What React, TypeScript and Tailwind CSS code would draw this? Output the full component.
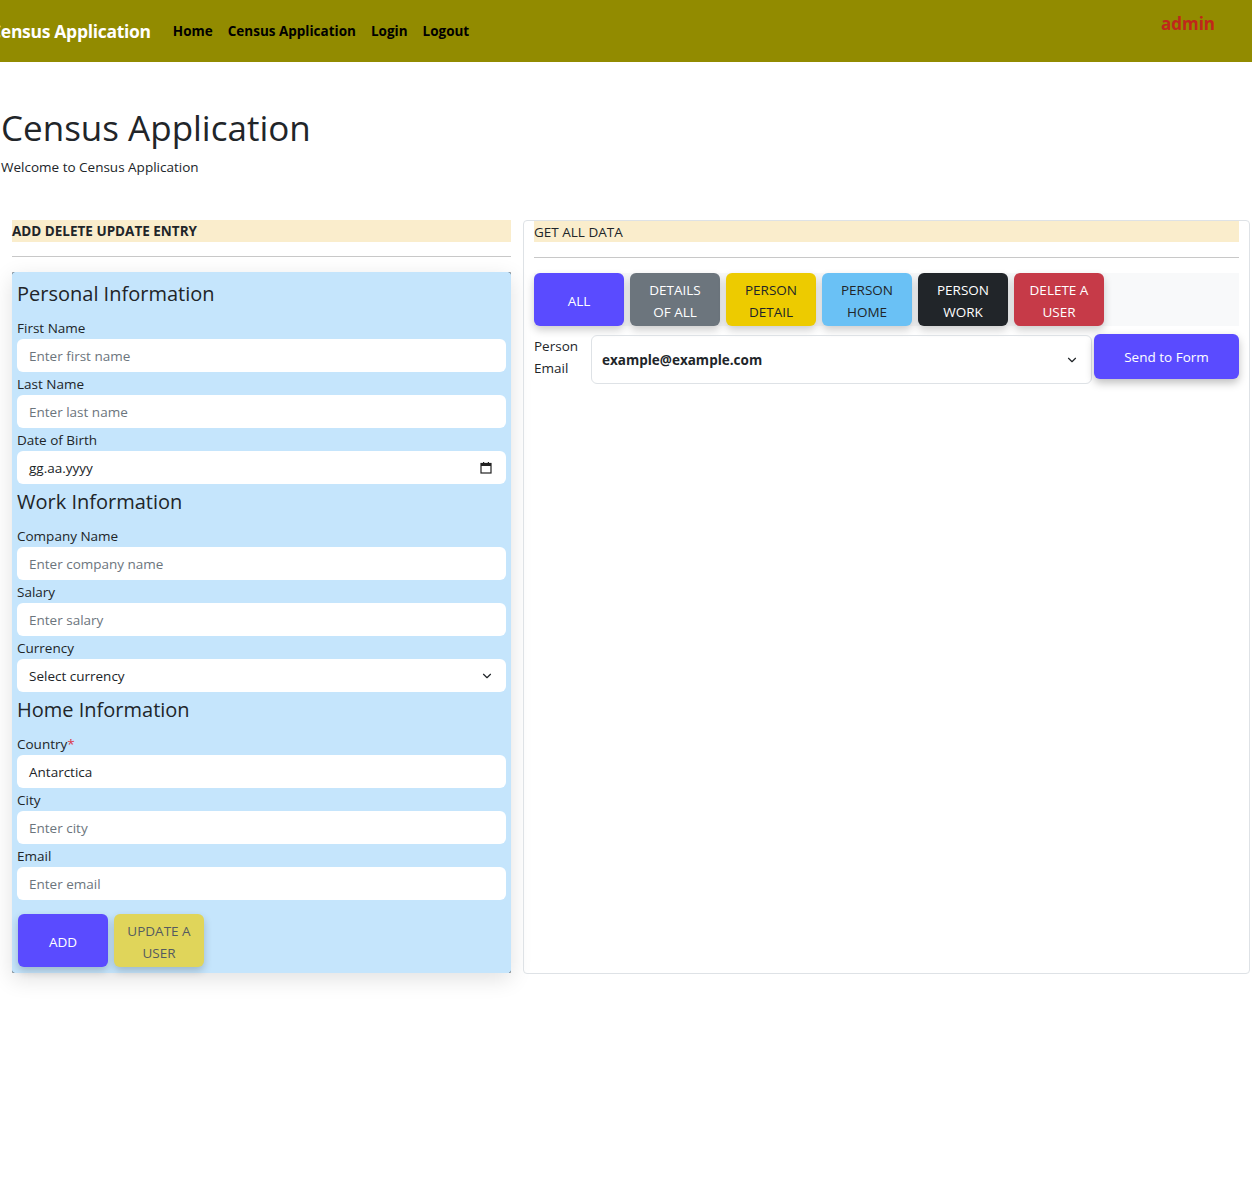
import { ChevronDown } from "lucide-react";

const font = { fontFamily: '"Open Sans", "Noto Sans", sans-serif' };

function CalendarIcon() {
  return (
    <svg width="12" height="12" viewBox="0 0 12 12" className="text-[#222]">
      <rect x="1" y="1.5" width="10" height="9.5" fill="none" stroke="currentColor" strokeWidth="1.2" />
      <rect x="1" y="1.5" width="10" height="2.5" fill="currentColor" />
      <rect x="3" y="0" width="1.2" height="2" fill="currentColor" />
      <rect x="7.8" y="0" width="1.2" height="2" fill="currentColor" />
    </svg>
  );
}

function Field({ label, placeholder, value, required }: { label: string; placeholder?: string; value?: string; required?: boolean }) {
  return (
    <div>
      <div className="h-[22px] text-[13.5px] leading-[22px] text-[#212529]">
        {label}
        {required && <span className="text-[#dc3545]">*</span>}
      </div>
      <div className="h-[34px] pb-px">
        <div className="flex h-[33px] items-center rounded-[6px] bg-white px-3 text-[13.5px]">
          {value ? (
            <span className="text-[#212529]">{value}</span>
          ) : (
            <span className="text-[#6c757d]">{placeholder}</span>
          )}
        </div>
      </div>
    </div>
  );
}

function Heading({ children }: { children: React.ReactNode }) {
  return <h3 className="mt-[4px] mb-[10px] h-[26px] text-[20px] leading-[26px] text-[#212529]">{children}</h3>;
}

function SmallBtn({ label, cls }: { label: React.ReactNode; cls: string }) {
  return (
    <button
      className={`flex h-[53px] w-[90px] items-center justify-center rounded-[6px] pt-[2px] text-center text-[13.5px] leading-[22px] shadow-[0_4px_8px_rgba(0,0,0,0.2)] ${cls}`}
    >
      {label}
    </button>
  );
}

export default function App() {
  return (
    <div className="min-h-[1189px] bg-white" style={font}>
      {/* navbar */}
      <nav className="flex h-[62px] items-center justify-between overflow-hidden bg-[#928b00]">
        <div className="flex items-center">
          <span className="ml-[-10px] text-[17.5px] font-bold tracking-[-0.3px] text-white">Census Application</span>
          <div className="ml-[22px] flex gap-[15px] text-[13.5px] font-bold text-black">
            <span>Home</span>
            <span>Census Application</span>
            <span>Login</span>
            <span>Logout</span>
          </div>
        </div>
        <span className="mr-[37px] mb-[14px] text-[17px] font-bold text-[#c0271a]">admin</span>
      </nav>

      {/* title */}
      <div className="pt-[42px] pl-px">
        <h1 className="text-[35px] leading-[48px] text-[#212529]">Census Application</h1>
        <p className="mt-[5px] text-[13.5px] text-[#212529]">Welcome to Census Application</p>
      </div>

      <div className="mt-[43px] flex items-start gap-[12px] pl-[12px] pr-[2px]">
        {/* left column */}
        <div className="w-[499px] shrink-0">
          <div className="h-[22px] bg-[#faedcc] text-[13.5px] font-bold leading-[22px] text-[#212529]">
            ADD DELETE UPDATE ENTRY
          </div>
          <hr className="mt-[14px] mb-[15px] border-t border-[#c8c8c8]" />
          <div className="rounded-[2px] bg-black shadow-[0_6px_22px_rgba(0,0,0,0.12)]">
            <div className="rounded-[3px] bg-[#c5e5fc] px-[5px] pt-[5px] pb-[6px]">
              <Heading>Personal Information</Heading>
              <Field label="First Name" placeholder="Enter first name" />
              <Field label="Last Name" placeholder="Enter last name" />
              <div>
                <div className="h-[22px] text-[13.5px] leading-[22px] text-[#212529]">Date of Birth</div>
                <div className="h-[34px] pb-px">
                  <div className="flex h-[33px] items-center justify-between rounded-[6px] bg-white pr-[14px] pl-3 text-[13.5px] text-[#212529]">
                    <span>gg.aa.yyyy</span>
                    <CalendarIcon />
                  </div>
                </div>
              </div>
              <Heading>Work Information</Heading>
              <Field label="Company Name" placeholder="Enter company name" />
              <Field label="Salary" placeholder="Enter salary" />
              <div>
                <div className="h-[22px] text-[13.5px] leading-[22px] text-[#212529]">Currency</div>
                <div className="h-[34px] pb-px">
                  <div className="flex h-[33px] items-center justify-between rounded-[6px] bg-white pr-[12px] pl-3 text-[13.5px] text-[#212529]">
                    <span>Select currency</span>
                    <ChevronDown size={14} strokeWidth={2} />
                  </div>
                </div>
              </div>
              <Heading>Home Information</Heading>
              <Field label="Country" value="Antarctica" required />
              <Field label="City" placeholder="Enter city" />
              <Field label="Email" placeholder="Enter email" />
              <div className="mt-[13px] flex gap-[6px] pl-px">
                <SmallBtn label="ADD" cls="bg-[#5a4bff] text-white" />
                <SmallBtn label={<>UPDATE A<br />USER</>} cls="bg-[#e0d55a] text-[#555b60]" />
              </div>
            </div>
          </div>
        </div>

        {/* right column */}
        <div className="flex h-[754px] flex-1 flex-col rounded-[4px] border border-[#dee2e6] px-[10px]">
          <div className="h-[21px] bg-[#faedcc] text-[13.5px] leading-[22px] text-[#212529]">GET ALL DATA</div>
          <hr className="mt-[15px] mb-[15px] border-t border-[#c8c8c8]" />
          <div className="flex h-[53px] gap-[6px] bg-[#f8f9fa]">
            <SmallBtn label="ALL" cls="bg-[#5a4bff] text-white" />
            <SmallBtn label={<>DETAILS<br />OF ALL</>} cls="bg-[#6c757d] text-white" />
            <SmallBtn label={<>PERSON<br />DETAIL</>} cls="bg-[#edcb00] text-[#212529]" />
            <SmallBtn label={<>PERSON<br />HOME</>} cls="bg-[#6ac1f5] text-[#212529]" />
            <SmallBtn label={<>PERSON<br />WORK</>} cls="bg-[#212529] text-white" />
            <SmallBtn label={<>DELETE A<br />USER</>} cls="bg-[#c63a48] text-white" />
          </div>
          <div className="mt-[8px] flex items-start">
            <div className="mt-[1px] w-[57px] text-[13.5px] leading-[22px] text-[#212529]">
              Person
              <br />
              Email
            </div>
            <div className="mt-px flex h-[49px] flex-1 items-center justify-between rounded-[6px] border border-[#dee2e6] pr-[12px] pl-[10px] text-[13.5px] font-bold text-[#212529]">
              <span>example@example.com</span>
              <ChevronDown size={14} strokeWidth={2} />
            </div>
            <button className="ml-[2px] h-[45px] w-[145px] rounded-[6px] bg-[#5a4bff] text-[13.5px] text-white shadow-[0_4px_8px_rgba(0,0,0,0.25)]">
              Send to Form
            </button>
          </div>
        </div>
      </div>
    </div>
  );
}
